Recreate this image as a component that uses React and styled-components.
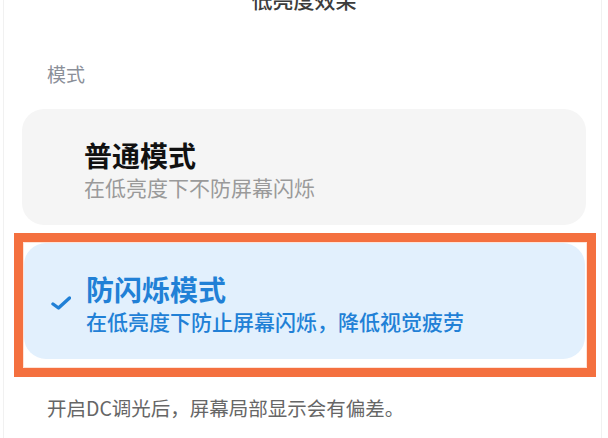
import styled, { createGlobalStyle } from "styled-components";

const GlobalStyle = createGlobalStyle`
  html, body {
    margin: 0;
    padding: 0;
    background: #ffffff;
    overflow: hidden;
  }
  body {
    font-family: "Noto Sans CJK SC", "Noto Sans", sans-serif;
  }
`

const Frame = styled.div`
  box-sizing: border-box;
  height: 438px;
  margin: 0 6px 0 3px;
  padding: 0 15px 0 18px;
  border-left: 1px solid #f1f1f1;
  border-right: 1px solid #f1f1f1;
  display: flex;
  flex-direction: column;
`

const Title = styled.div`
  margin-top: -11px;
  font-size: 21px;
  line-height: 21px;
  font-weight: 500;
  color: #3c3c3c;
  text-align: center;
`

const Label = styled.div`
  margin: 54px 0 0 25px;
  font-size: 19px;
  line-height: 19px;
  color: #8b9099;
`

const List = styled.div`
  margin-top: 26px;
  display: flex;
  flex-direction: column;
`

// orange frame drawn round the selected option
const Highlight = styled.div`
  margin: 8px -10px 0 -8px;
  padding: 1px 2px 9px 1px;
  border: 9px solid #f4703f;
  box-shadow: inset 0 0 0 1px #fde3d8;
`

const Card = styled.div`
  box-sizing: border-box;
  height: 116px;
  display: flex;
  align-items: center;
  padding-top: 3px;
  border-radius: 22px;
  background: ${props => props.active ? '#e2f0fd' : '#f5f5f5'};
  color: ${props => props.active ? '#2180d6' : '#111111'};
`

const Mark = styled.div`
  box-sizing: border-box;
  width: 62px;
  flex-shrink: 0;
  padding-left: 27px;
  display: flex;
  align-items: center;
`

const Body = styled.div`
  display: flex;
  flex-direction: column;
  gap: 2px;
`

const Name = styled.div`
  font-size: 28px;
  line-height: 34px;
  font-weight: 700;
`

const Desc = styled.div`
  font-size: 21px;
  line-height: 26px;
  font-weight: ${props => props.active ? 500 : 400};
  color: ${props => props.active ? '#2180d6' : '#9a9a9a'};
`

const Note = styled.div`
  margin: 21px 0 0 25px;
  font-size: 19.5px;
  line-height: 19px;
  color: #666666;
`

const Check = () => (
  <svg width="20" height="14" viewBox="0 0 20 14">
    <path d="M2 8 L7.5 12 L18.5 2" fill="none" stroke="#2180d6" strokeWidth="3.4" strokeLinecap="round" strokeLinejoin="round" />
  </svg>
)

const Mode = ({ name, desc, active }) => (
  <Card active={active}>
    <Mark>{active && <Check />}</Mark>
    <Body>
      <Name>{name}</Name>
      <Desc active={active}>{desc}</Desc>
    </Body>
  </Card>
)

const App = () => {
  return (
    <>
      <GlobalStyle />
      <Frame>
        <Title>低亮度效果</Title>
        <Label>模式</Label>
        <List>
          <Mode name="普通模式" desc="在低亮度下不防屏幕闪烁" />
          <Highlight>
            <Mode active name="防闪烁模式" desc="在低亮度下防止屏幕闪烁，降低视觉疲劳" />
          </Highlight>
        </List>
        <Note>开启DC调光后，屏幕局部显示会有偏差。</Note>
      </Frame>
    </>
  )
}

export default App
